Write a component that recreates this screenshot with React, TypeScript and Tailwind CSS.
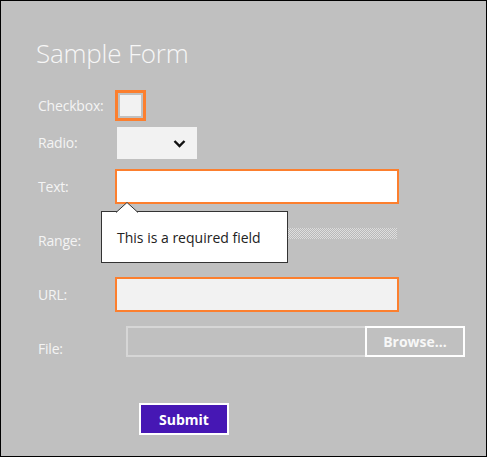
import React from "react";

const label = "w-[77px] shrink-0 text-[14px] leading-[20px] tracking-[-0.2px] text-[#f4f4f4]";

export default function App() {
  return (
    <div
      className="box-border w-[487px] h-[457px] border border-black bg-[#c0c0c0] pt-[36px] pl-[37px]"
      style={{ fontFamily: '"Open Sans", "Noto Sans", sans-serif' }}
    >
      {/* title */}
      <h1 className="-ml-[2px] text-[26px] leading-[32px] font-light tracking-[-0.2px] text-[#f7f7f7]">Sample Form</h1>

      {/* checkbox */}
      <div className="mt-[21px] flex items-center">
        <span className={label}>Checkbox:</span>
        <div className="box-border flex h-[31px] w-[31px] items-center justify-center border-[3px] border-[#fc7f2e]">
          <div className="h-[21px] w-[21px] bg-[#f2f2f2]" />
        </div>
      </div>

      {/* radio / select */}
      <div className="mt-[6px] flex items-center">
        <span className={label}>Radio:</span>
        <div className="ml-[2px] flex h-[32px] w-[80px] items-center justify-end bg-[#f2f2f2] pr-[11px]">
          <svg width="13" height="9" viewBox="0 0 13 9">
            <polyline points="1.5,2 6.5,7 11.5,2" fill="none" stroke="#111" strokeWidth="2.4" />
          </svg>
        </div>
      </div>

      {/* text */}
      <div className="mt-[10px] flex items-center">
        <span className={label}>Text:</span>
        <div className="relative">
          <input
            className="box-border block h-[35px] w-[284px] border-2 border-[#fc7f2e] bg-white outline-none"
            type="text"
          />
          {/* validation tooltip */}
          <div className="absolute left-[-14px] top-[42px] z-10 box-border h-[52px] w-[187px] border border-[#333] bg-white pl-[15px] pt-[16px] text-[14px] leading-[20px] text-[#222]">
            This is a required field
            <svg className="absolute left-[14px] top-[-10px]" width="22" height="11" viewBox="0 0 22 11">
              <polygon points="0,10.5 11,0.5 22,10.5" fill="white" />
              <polyline points="0,10.5 11,0.5 22,10.5" fill="none" stroke="#333" strokeWidth="1" />
            </svg>
          </div>
        </div>
      </div>

      {/* range */}
      <div className="mt-[24px] flex items-start">
        <span className={`${label} mt-[3px]`}>Range:</span>
        <div className="ml-[2px] h-[11px] w-[280px] bg-[repeating-conic-gradient(#dedede_0_25%,#b9b9b9_0_50%)] bg-[length:2px_2px]" />
      </div>

      {/* url */}
      <div className="mt-[26px] flex items-center">
        <span className={label}>URL:</span>
        <input
          className="box-border block h-[35px] w-[284px] border-2 border-[#fc7f2e] bg-[#f2f2f2] outline-none"
          type="url"
        />
      </div>

      {/* file */}
      <div className="mt-[14px] flex h-[31px] items-start">
        <span className={`${label} pt-[13px]`}>File:</span>
        <div className="ml-[11px] flex">
          <div className="box-border h-[31px] w-[239px] border-2 border-r-0 border-[#d6d6d6]" />
          <button className="box-border h-[31px] w-[100px] border-2 border-white text-[14px] font-bold text-[#f7f7f7]">
            Browse...
          </button>
        </div>
      </div>

      {/* submit */}
      <button className="ml-[101px] mt-[46px] box-border block h-[32px] w-[90px] border-2 border-white bg-[#4617b4] text-[14px] font-bold text-white">
        Submit
      </button>
    </div>
  );
}
